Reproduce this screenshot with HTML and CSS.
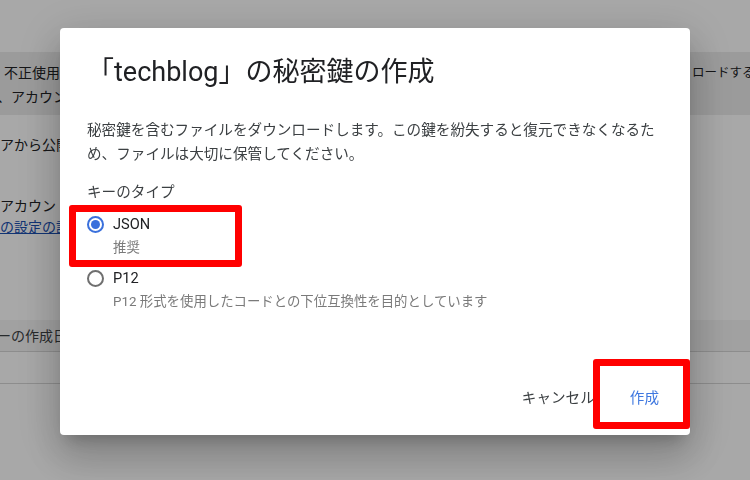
FILE: index.html
```html
<!DOCTYPE html>
<html lang="ja">
<head>
  <meta charset="UTF-8">
  <title>秘密鍵の作成</title>
  <link rel="stylesheet" href="styles.css">
</head>
<body>
  <!-- page behind the dialog -->
  <div class="page">
    <div class="notice">
      <p class="notice-line">
        <span class="notice-left">不正使用を防ぐため、サービス アカウント キーは安全な場所に保管してください。キーをダウン</span>
        <span class="notice-right">ロードする</span>
      </p>
      <p class="notice-line shift">、アカウントへのアクセスが可能になります。</p>
    </div>
    <p class="page-text">アから公開鍵をアップロードできます。</p>
    <p class="page-text pair">アカウントキーの作成を無効にするには<br><a href="#">の設定の詳細</a></p>
    <div class="key-table">
      <div class="key-head">ーの作成日</div>
      <div class="key-row"></div>
    </div>
  </div>

  <!-- modal -->
  <div class="overlay">
    <div class="dialog">
      <h2 class="dialog-title">「techblog」の秘密鍵の作成</h2>
      <p class="dialog-text">秘密鍵を含むファイルをダウンロードします。この鍵を紛失すると復元できなくなるため、ファイルは大切に保管してください。</p>

      <p class="group-label">キーのタイプ</p>
      <div class="option">
        <span class="radio checked"></span>
        <span class="option-name">JSON</span>
      </div>
      <p class="option-hint">推奨</p>
      <div class="option">
        <span class="radio"></span>
        <span class="option-name">P12</span>
      </div>
      <p class="option-hint">P12 形式を使用したコードとの下位互換性を目的としています</p>

      <div class="actions">
        <button class="btn">キャンセル</button>
        <button class="btn primary">作成</button>
      </div>

      <!-- red annotation frames -->
      <div class="mark mark-json"></div>
      <div class="mark mark-create"></div>
    </div>
  </div>
</body>
</html>
```

FILE: styles.css
```css
body {
  margin: 0;
  font-family: 'Roboto', 'Noto Sans CJK JP', sans-serif;
  color: #202124;
  background: #fff;
  overflow: hidden;
}

p {
  margin: 0;
}

/* background page */
.page {
  padding-top: 52px;
  font-size: 14px;
}

.notice {
  height: 63px;
  box-sizing: border-box;
  padding: 9px 0 0 4px;
  background: #ececec;
}

.notice-line {
  display: flex;
  line-height: 24px;
  white-space: nowrap;
}

.notice-left {
  flex: 0 0 688px;
  overflow: hidden;
}

.notice-right {
  font-size: 12.5px;
  color: #202124;
}

.notice-line.shift {
  margin-left: -7px;
}

.page-text {
  margin-top: 18px;
  line-height: 24px;
}

.page-text.pair {
  margin-top: 39px;
  line-height: 21px;
}

.page-text a {
  color: #1a4fb0;
}

.key-table {
  margin-top: 82px;
}

.key-head {
  height: 31px;
  line-height: 32px;
  margin-left: -3px;
  background: #f4f4f4;
  border-bottom: 1px solid #d6d6d6;
  color: #3c4043;
}

.key-row {
  height: 31px;
  border-bottom: 1px solid #d6d6d6;
}

/* dialog */
.overlay {
  position: fixed;
  top: 0; left: 0;
  width: 100%;
  height: 100%;
  background: rgba(0, 0, 0, 0.34);
  display: flex;
  justify-content: center;
  align-items: flex-start;
  padding-top: 28px;
  box-sizing: border-box;
}

.dialog {
  position: relative;
  width: 630px;
  height: 407px;
  box-sizing: border-box;
  padding: 24px 27px 0;
  background: #fff;
  border-radius: 4px;
  box-shadow: 0 11px 15px -7px rgba(0, 0, 0, 0.2),
              0 24px 38px 3px rgba(0, 0, 0, 0.14),
              0 9px 46px 8px rgba(0, 0, 0, 0.12);
  display: flex;
  flex-direction: column;
}

.dialog-title {
  margin: 0;
  font-size: 27px;
  font-weight: 400;
  line-height: 40px;
  color: #202124;
}

.dialog-text {
  margin-top: 26px;
  font-size: 14.6px;
  line-height: 24px;
  color: #3c4043;
}

.group-label {
  margin-top: 14px;
  font-size: 14.6px;
  line-height: 24px;
  color: #3c4043;
}

.option {
  display: flex;
  align-items: center;
  gap: 9px;
  margin-top: 8px;
  height: 24px;
}

.option-name {
  font-size: 14.6px;
  color: #202124;
}

.radio {
  width: 17px;
  height: 17px;
  box-sizing: border-box;
  border: 2px solid #6f6f6f;
  border-radius: 50%;
  display: flex;
  align-items: center;
  justify-content: center;
}

.radio.checked {
  border-color: #3a70dc;
}

.radio.checked::after {
  content: '';
  width: 9px;
  height: 9px;
  border-radius: 50%;
  background: #3a70dc;
}

.option-hint {
  margin-top: 2px;
  padding-left: 26px;
  font-size: 13.4px;
  line-height: 20px;
  color: #7a7a7a;
}

.actions {
  margin-top: auto;
  margin-bottom: 21px;
  display: flex;
  justify-content: flex-end;
  gap: 3px;
  margin-right: -11px;
}

.btn {
  height: 36px;
  padding: 0 16px;
  border: none;
  background: none;
  font-family: inherit;
  font-size: 14.6px;
  color: #3c4043;
  cursor: pointer;
}

.btn.primary {
  padding: 0 15px 0 16px;
  color: #3f78e0;
}

.mark {
  position: absolute;
  border: 7px solid #ff0000;
  border-radius: 3px;
  box-sizing: border-box;
}

.mark-json {
  left: 9px;
  top: 177px;
  width: 173px;
  height: 62px;
}

.mark-create {
  left: 533px;
  top: 331px;
  width: 97px;
  height: 70px;
}
```
